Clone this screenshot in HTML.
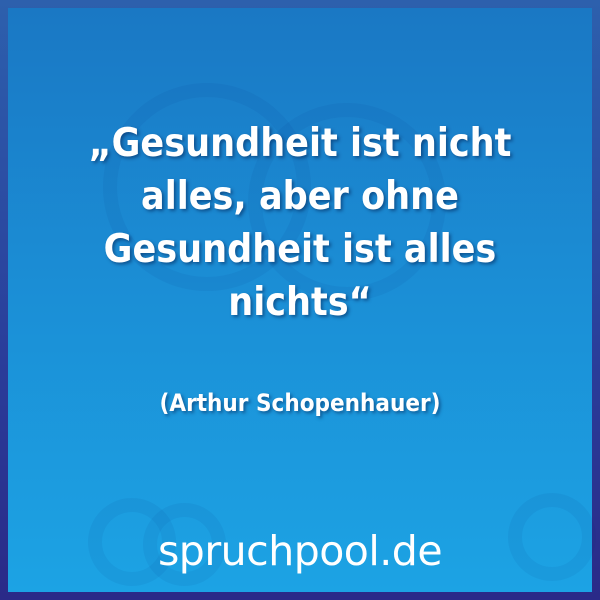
<!DOCTYPE html>
<html><head><meta charset="utf-8"><style>
html,body{margin:0;padding:0}
body{width:600px;height:600px;position:relative;overflow:hidden;background:linear-gradient(#2d60ad,#2a3d9a 60%,#2a2a88);font-family:"DejaVu Sans","Liberation Sans",sans-serif}
.in{position:absolute;left:8px;top:8px;width:584px;height:584px;background:linear-gradient(#1a78c4,#1b8fd6 50%,#1ca3e4)}
.q{position:absolute;left:0;width:600px;text-align:center;color:#fff;font-weight:bold;font-family:"DejaVu Sans Condensed","DejaVu Sans",sans-serif;font-stretch:condensed;text-shadow:2px 2px 3px rgba(0,30,80,.5)}
.l{font-size:39px;line-height:53px;top:117px}
.a{font-size:24px;top:389px}
.logo{position:absolute;left:0;width:600px;top:527px;text-align:center;color:#fff;font-family:"DejaVu Sans",sans-serif;font-size:41px;letter-spacing:-0.5px}
.c{position:absolute;border-radius:50%;border:14px solid rgba(0,40,120,.06)}
</style></head><body>
<div class="in">
<div class="c" style="left:95px;top:75px;width:180px;height:180px"></div>
<div class="c" style="left:240px;top:95px;width:170px;height:170px"></div>
<div class="c" style="left:80px;top:490px;width:60px;height:60px"></div>
<div class="c" style="left:135px;top:495px;width:55px;height:55px"></div>
<div class="c" style="left:500px;top:485px;width:60px;height:60px"></div>
</div>
<div class="q l">„Gesundheit ist nicht<br>alles, aber ohne<br>Gesundheit ist alles<br>nichts“</div>
<div class="q a">(Arthur Schopenhauer)</div>
<div class="logo">spruchpool.de</div>
</body></html>
